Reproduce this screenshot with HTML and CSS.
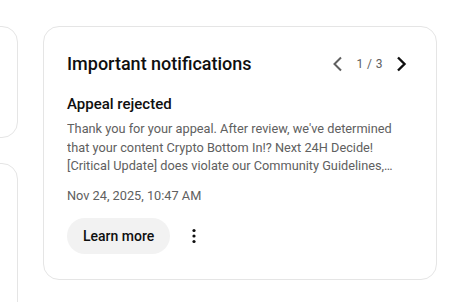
FILE: index.html
```html
<!DOCTYPE html>
<html>
<head>
<meta charset="utf-8">
<link rel="stylesheet" href="styles.css">
</head>
<body>
<div class="page">
  <div class="side">
    <div class="side-card side-card-a"></div>
    <div class="side-card side-card-b"></div>
  </div>
  <section class="card">
    <header class="card-head">
      <h2 class="title">Important notifications</h2>
      <nav class="pager">
        <svg class="chev chev-prev" width="24" height="24" viewBox="0 0 24 24"><path d="M15 5.5 8.5 12l6.5 6.5" fill="none" stroke="#606060" stroke-width="2"/></svg>
        <span class="count">1 / 3</span>
        <svg class="chev chev-next" width="24" height="24" viewBox="0 0 24 24"><path d="M9 5.5 15.5 12 9 18.5" fill="none" stroke="#0f0f0f" stroke-width="2.4"/></svg>
      </nav>
    </header>
    <h3 class="subject">Appeal rejected</h3>
    <p class="body">Thank you for your appeal. After review, we've determined that your content Crypto Bottom In!? Next 24H Decide! [Critical Update] does violate our Community Guidelines, and will remain removed.</p>
    <div class="date">Nov 24, 2025, 10:47 AM</div>
    <div class="actions">
      <button class="btn">Learn more</button>
      <svg class="kebab" width="24" height="24" viewBox="0 0 24 24"><circle cx="12" cy="6.5" r="1.6" fill="#0f0f0f"/><circle cx="12" cy="12" r="1.6" fill="#0f0f0f"/><circle cx="12" cy="17.5" r="1.6" fill="#0f0f0f"/></svg>
    </div>
  </section>
</div>
</body>
</html>
```
FILE: styles.css
```css
* { box-sizing: border-box; }
html, body { margin: 0; padding: 0; background: #fff; }
body { font-family: Roboto, "Liberation Sans", Arial, sans-serif; color: #0f0f0f; overflow: hidden; height: 302px; }
.page { display: flex; gap: 25px; padding-top: 26px; margin-left: -183px; }
.side { display: flex; flex-direction: column; gap: 25px; width: 201px; flex: none; }
.side-card { border: 1px solid #e5e5e5; border-radius: 16px; }
.side-card-a { height: 112px; }
.side-card-b { height: 200px; }
.card { width: 394px; height: 254px; flex: none; border: 1px solid #e5e5e5; border-radius: 16px; padding: 24px 23px 0 23px; }
.card-head { display: flex; align-items: center; justify-content: space-between; height: 26px; }
.title { margin: 0; font-size: 18px; font-weight: 500; line-height: 26px; }
.pager { display: flex; align-items: center; margin-right: 0; }
.chev { display: block; }
.count { font-size: 12px; color: #606060; margin: 0 6px 0 7px; letter-spacing: 0.4px; }
.subject { margin: 17px 0 0; font-size: 15px; font-weight: 500; line-height: 20px; }
.body { margin: 6px 0 0; max-width: 334px; font-size: 12.75px; line-height: 18.5px; color: #606060; height: 55.5px; overflow: hidden; display: -webkit-box; -webkit-line-clamp: 3; -webkit-box-orient: vertical; }
.date { margin-top: 11px; font-size: 12.75px; line-height: 18px; color: #606060; }
.actions { display: flex; align-items: center; margin-top: 13px; gap: 12px; }
.btn { font-family: inherit; border: 0; background: #f2f2f2; border-radius: 18px; height: 36px; padding: 0 16px; font-size: 14px; font-weight: 500; color: #0f0f0f; }
.kebab { display: block; }
```
